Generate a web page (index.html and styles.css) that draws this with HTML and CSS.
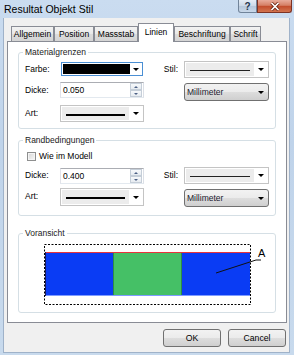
FILE: index.html
```html
<!DOCTYPE html>
<html lang="de">
<head>
  <meta charset="UTF-8" />
  <meta name="viewport" content="width=device-width, initial-scale=1.0"/>
  <title>Resultat Objekt Stil</title>
  <link rel="stylesheet" href="styles.css">
</head>
<body>

  <div class="window">
    <div class="titlebar">
      <span class="title">Resultat Objekt Stil</span>
      <div class="caption">
        <span class="cap-btn help">?</span>
        <span class="cap-btn close">
          <svg width="10" height="9" viewBox="0 0 10 9">
            <path d="M1.5 1 L8.5 8 M8.5 1 L1.5 8" stroke="#6b2414" stroke-width="3.2"/>
            <path d="M1.5 1 L8.5 8 M8.5 1 L1.5 8" stroke="#fff" stroke-width="1.7"/>
          </svg>
        </span>
      </div>
    </div>

    <div class="client">
      <div class="tabs">
        <span class="tab w-allg">Allgemein</span>
        <span class="tab w-pos">Position</span>
        <span class="tab w-mass">Massstab</span>
        <span class="tab tab-active w-lin">Linien</span>
        <span class="tab w-besch">Beschriftung</span>
        <span class="tab w-schrift">Schrift</span>
      </div>

      <div class="panel">

        <div class="group group-mat">
          <span class="group-title">Materialgrenzen</span>

          <label class="lbl">Farbe:</label>
          <div class="combo combo-color"><span class="swatch"></span><span class="arrow"></span></div>
          <label class="lbl lbl-right">Stil:</label>
          <div class="combo combo-line"><span class="sample"><span class="stroke"></span></span><span class="arrow"></span></div>

          <label class="lbl">Dicke:</label>
          <div class="spin">
            <span class="spin-value">0.050</span>
            <span class="spin-btns"><span class="spin-btn up"></span><span class="spin-btn down"></span></span>
          </div>
          <div class="combo combo-unit col-4"><span class="unit-text">Millimeter</span><span class="arrow"></span></div>

          <label class="lbl">Art:</label>
          <div class="combo combo-line"><span class="sample"><span class="stroke stroke-thick"></span></span><span class="arrow"></span></div>
        </div>

        <div class="group group-rand">
          <span class="group-title">Randbedingungen</span>

          <div class="check"><span class="check-box"></span>Wie im Modell</div>

          <label class="lbl">Dicke:</label>
          <div class="spin mt1">
            <span class="spin-value">0.400</span>
            <span class="spin-btns"><span class="spin-btn up"></span><span class="spin-btn down"></span></span>
          </div>
          <label class="lbl lbl-right">Stil:</label>
          <div class="combo combo-line"><span class="sample"><span class="stroke"></span></span><span class="arrow"></span></div>

          <label class="lbl">Art:</label>
          <div class="combo combo-line tall"><span class="sample"><span class="stroke stroke-thick"></span></span><span class="arrow"></span></div>
          <div class="combo combo-unit col-4"><span class="unit-text">Millimeter</span><span class="arrow"></span></div>
        </div>

        <div class="group group-view">
          <span class="group-title">Voransicht</span>
          <svg class="preview" width="256" height="78" viewBox="0 0 256 78">
            <rect x="26" y="18" width="205" height="44" fill="#0a3cf4"/>
            <rect x="94" y="18" width="69" height="44" fill="#2f8c46"/>
            <rect x="95" y="19" width="67" height="42" fill="#45c066"/>
            <rect x="26" y="18" width="205" height="1" fill="#e8343c"/>
            <rect x="26" y="61" width="205" height="1" fill="#7f9cff"/>
            <rect x="26" y="18" width="1" height="44" fill="#1a1a5a"/>
            <rect x="25.5" y="10.5" width="206" height="60" fill="none" stroke="#000" stroke-dasharray="2 1.5"/>
            <polyline points="197,39 237,26 242,26" fill="none" stroke="#111" stroke-width="1"/>
            <text x="239" y="23" font-family="Liberation Sans, Arial, sans-serif" font-size="11" fill="#000">A</text>
          </svg>
        </div>

      </div>

      <div class="buttons">
        <button class="btn">OK</button>
        <button class="btn">Cancel</button>
      </div>
    </div>
  </div>

</body>
</html>
```

FILE: styles.css
```css
* {
  box-sizing: border-box;
}
body {
  margin: 0;
  font-family: "Liberation Sans", Arial, sans-serif;
  font-size: 8.5px;
  color: #000;
  background-color: #c4d7ec;
}
.window {
  width: 294px;
  height: 355px;
  overflow: hidden;
  background: linear-gradient(180deg, #cadcf0 0%, #bfd3ea 40%, #c8daed 100%);
}

/* title bar */
.titlebar {
  height: 18px;
  display: flex;
  justify-content: space-between;
  align-items: flex-start;
}
.title {
  font-size: 10.5px;
  line-height: 18px;
  padding-left: 4px;
}
.caption {
  display: flex;
  margin-right: 2px;
}
.cap-btn {
  height: 13px;
  display: flex;
  align-items: center;
  justify-content: center;
  border: 1px solid;
  border-top: none;
}
.help {
  width: 19px;
  border-color: #71849a;
  border-radius: 0 0 0 3px;
  background: linear-gradient(#e4ecf5, #cbd8e7 50%, #b5c7db 51%, #c9d8e9);
  color: #24364d;
  font-weight: bold;
  font-size: 10px;
}
.close {
  width: 35px;
  border-color: #7d3324;
  border-radius: 0 0 3px 0;
  background: linear-gradient(#e8ab9b, #d57f65 45%, #c24b2b 50%, #d2744f);
}

/* client area */
.client {
  margin-left: 3px;
  width: 287px;
  height: 335px;
  background-color: #f0f0f0;
  border: 1px solid #9fb2c9;
  border-top: none;
  padding: 5px 2px 5px 3px;
}
.tabs {
  display: flex;
  align-items: flex-end;
  height: 18px;
  padding-left: 4px;
}
.tab {
  height: 15px;
  border: 1px solid #898c95;
  border-bottom: none;
  background: linear-gradient(#f3f3f3, #e8e8e8 50%, #dcdcdc 51%, #d4d4d4);
  text-align: center;
  line-height: 14px;
  white-space: nowrap;
}
.tab-active {
  height: 19px;
  margin-bottom: -1px;
  background: #fff;
  line-height: 17px;
  position: relative;
  z-index: 1;
}
.w-allg { width: 43px; }
.w-pos { width: 40px; }
.w-mass { width: 44px; }
.w-lin { width: 36px; }
.w-besch { width: 56px; }
.w-schrift { width: 31px; }

.panel {
  width: 280px;
  height: 282px;
  border: 1px solid #898c95;
  background-color: #fff;
  padding: 10px 10px 0;
}

/* group boxes */
.group {
  position: relative;
  border: 1px solid #d5dfe5;
  border-radius: 3px;
  display: grid;
  grid-template-columns: 35px 84px 40px 85px;
  padding: 0 6px;
}
.group-title {
  position: absolute;
  top: -6px;
  left: 4px;
  padding: 0 2px;
  line-height: 10px;
  background-color: #fff;
  color: #1b1b1b;
}
.group-mat {
  padding-top: 8px;
  padding-bottom: 6px;
  grid-template-rows: 21px 23px 17px;
  margin-bottom: 11px;
}
.group-rand {
  padding-top: 10px;
  padding-bottom: 8px;
  grid-template-rows: 16px 21px 19px;
  margin-bottom: 17px;
}
.group-view {
  display: block;
  height: 80px;
  padding: 0;
}
.preview {
  display: block;
}

.lbl {
  align-self: start;
  line-height: 17px;
}
.lbl-right {
  text-align: right;
  padding-right: 6px;
}
.col-4 {
  grid-column: 4;
}
.mt1 {
  margin-top: 1px;
}

/* combos */
.combo {
  align-self: start;
  display: flex;
  height: 17px;
  border: 1px solid #c4c4c4;
  background-color: #fff;
  padding: 1px;
}
.combo.tall {
  height: 18px;
}
.arrow {
  width: 13px;
  display: flex;
  align-items: center;
  justify-content: center;
}
.arrow::after {
  content: "";
  border-left: 3px solid transparent;
  border-right: 3px solid transparent;
  border-top: 3px solid #000;
}
.sample {
  flex: 1;
  display: flex;
  align-items: center;
  padding: 2px 4px 0;
  background-color: #ececec;
}
.stroke {
  flex: 1;
  height: 1px;
  background-color: #222;
}
.stroke-thick {
  height: 2px;
  background-color: #000;
}
.combo-color {
  height: 14px;
  margin: 1px 1px 0;
  border-color: #4a8fd4;
}
.combo-color .arrow {
  width: 11px;
}
.swatch {
  flex: 1;
  background-color: #000;
}
.combo-unit {
  height: 18px;
  margin-top: 1px;
  padding: 0;
  border-color: #707070;
  border-radius: 3px;
  background: linear-gradient(#f2f2f2, #ebebeb 50%, #dddddd 51%, #cfcfcf);
}
.unit-text {
  flex: 1;
  padding-left: 2px;
  line-height: 16px;
  color: #1a1a2e;
}
.combo-unit .arrow {
  margin-right: 1px;
}

/* spinner */
.spin {
  align-self: start;
  display: flex;
  height: 16px;
  border: 1px solid;
  border-color: #abadb3 #dbdfe6 #e3e9ef #e2e3ea;
  background-color: #fff;
}
.spin-value {
  flex: 1;
  padding-left: 2px;
  line-height: 14px;
}
.spin-btns {
  width: 13px;
  display: flex;
  flex-direction: column;
  padding: 0 1px 0 0;
}
.spin-btn {
  flex: 1;
  display: flex;
  align-items: center;
  justify-content: center;
  border: 1px solid #c5ced8;
  background: linear-gradient(#f7f9fb, #e6ebf0);
}
.spin-btn.up::after {
  content: "";
  border-left: 2px solid transparent;
  border-right: 2px solid transparent;
  border-bottom: 2px solid #4d6185;
}
.spin-btn.down::after {
  content: "";
  border-left: 2px solid transparent;
  border-right: 2px solid transparent;
  border-top: 2px solid #4d6185;
}

/* checkbox */
.check {
  grid-column: 1 / 5;
  align-self: start;
  display: flex;
  align-items: center;
  gap: 3px;
  margin: 1px 0 0 2px;
  line-height: 9px;
}
.check-box {
  width: 9px;
  height: 9px;
  border: 1px solid #8e8f8f;
  background: linear-gradient(135deg, #d6d6d6, #f8f8f8);
  box-shadow: inset 0 0 0 1px #f4f4f4;
}

/* dialog buttons */
.buttons {
  display: flex;
  justify-content: flex-end;
  gap: 7px;
  margin-top: 6px;
  padding-right: 1px;
}
.btn {
  width: 58px;
  height: 18px;
  padding: 0;
  border: 1px solid #707070;
  border-radius: 3px;
  background: linear-gradient(#f2f2f2, #ebebeb 50%, #dddddd 51%, #cfcfcf);
  font-family: inherit;
  font-size: 8.7px;
  color: #000;
  line-height: 16px;
}
```
